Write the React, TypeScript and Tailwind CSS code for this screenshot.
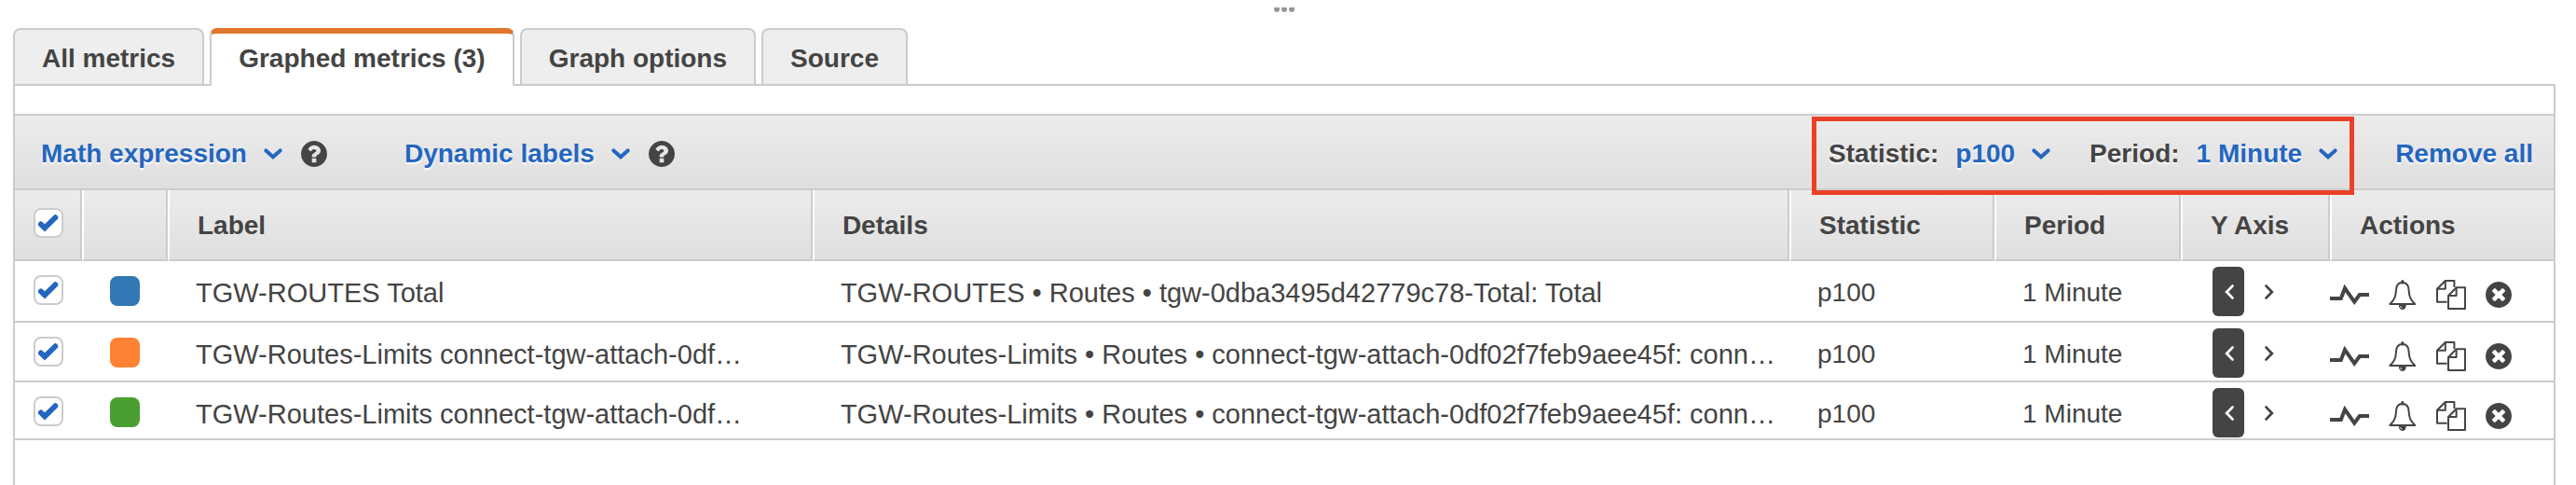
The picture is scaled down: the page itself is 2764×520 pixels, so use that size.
import { useState } from "react";
import type { ReactNode } from "react";

const CIRCLE =
  "M1664 896q0 209-103 385.5t-279.5 279.5-385.5 103-385.5-103-279.5-279.5-103-385.5 103-385.5 279.5-279.5 385.5-103 385.5 103 279.5 279.5 103 385.5z";

function ChevronDown() {
  return (
    <svg width="20" height="12" viewBox="0 0 20 12" fill="none" stroke="#2466bf" strokeWidth="4" strokeLinecap="round" aria-hidden="true">
      <path d="M2.4 2.4 L10 9.2 L17.6 2.4" />
    </svg>
  );
}

function HelpIcon() {
  return (
    <svg width="28" height="28" viewBox="128 128 1536 1536" fill="#444444" fillRule="evenodd" aria-hidden="true">
      <path
        d={
          CIRCLE +
          "M1024 1376v-192q0-14-9-23t-23-9h-192q-14 0-23 9t-9 23v192q0 14 9 23t23 9h192q14 0 23-9t9-23zM1280 704q0-88-55.5-163t-138.5-116-170-41q-243 0-371 213-15 24 8 42l132 100q7 6 19 6 16 0 25-12 53-68 86-92 34-24 86-24 48 0 85.5 26t37.5 59q0 38-20 61t-68 45q-63 28-115.5 86.5t-52.5 125.5v36q0 14 9 23t23 9h192q14 0 23-9t9-23q0-19 21.5-49.5t54.5-49.5q32-18 49-28.5t46-35 44.5-48 28-60.5 12.5-81z"
        }
      />
    </svg>
  );
}

function RemoveIcon() {
  return (
    <svg width="28" height="28" viewBox="128 128 1536 1536" fill="#444444" fillRule="evenodd" aria-hidden="true">
      <path
        d={
          CIRCLE +
          "M1277 1122q0-26-19-45l-181-181 181-181q19-19 19-45 0-27-19-46l-90-90q-19-19-46-19-26 0-45 19l-181 181-181-181q-19-19-45-19-27 0-46 19l-90 90q-19 19-19 46 0 26 19 45l181 181-181 181q-19 19-19 45 0 27 19 46l90 90q19 19 46 19 26 0 45-19l181-181 181 181q19 19 45 19 27 0 46-19l90-90q19-19 19-46z"
        }
      />
    </svg>
  );
}

function WaveIcon() {
  return (
    <svg width="42" height="24" viewBox="0 0 42 24" fill="none" stroke="#444444" strokeWidth="4" aria-hidden="true">
      <path d="M0 16 H11.8 L16 5 L26.2 19.6 L31.8 12 H42" />
    </svg>
  );
}

function BellIcon() {
  return (
    <svg width="30" height="32" viewBox="0 0 30 32" fill="none" stroke="#444444" strokeWidth="2" strokeLinejoin="round" aria-hidden="true">
      <path d="M14.8 3 C10 3 8.2 5.8 8 11 C7.6 18.5 6 21.5 1.4 26 H28.2 C23.6 21.5 22 18.5 21.6 11 C21.4 5.8 19.6 3 14.8 3 Z" />
      <path d="M14.8 1.6 V3" strokeWidth="3" strokeLinecap="round" />
      <path d="M10.8 27 C11 30.6 12.6 32 14.8 32 C17 32 18.6 30.6 18.8 27 Z" fill="#444444" stroke="none" />
      <path d="M12.6 28.2 C12.8 29.4 13.4 30 14.2 30.4" stroke="#ffffff" strokeWidth="1" />
    </svg>
  );
}

function CopyIcon() {
  return (
    <svg width="32" height="32" viewBox="0 0 32 32" fill="none" stroke="#444444" strokeWidth="2" strokeLinejoin="round" aria-hidden="true">
      <path d="M11.6 23.8 H1 V9.8 L9.8 1 H19.4 V8" />
      <path d="M1.4 9.8 H9.8 V1.4" />
      <path d="M13 31 V17 L21.6 8.2 H31 V31 Z" fill="#ffffff" />
      <path d="M13.4 17 H21.6 V8.6" />
    </svg>
  );
}

function Checkbox({ label }: { label: string }) {
  const [checked, setChecked] = useState(true);
  return (
    <label className="relative mx-auto block size-8 cursor-pointer">
      <input
        type="checkbox"
        aria-label={label}
        checked={checked}
        onChange={(e) => setChecked(e.target.checked)}
        className="block size-8 cursor-pointer appearance-none rounded-lg border-2 border-[#cccccc] bg-white"
      />
      {checked && (
        <svg
          className="pointer-events-none absolute inset-0"
          width="32"
          height="32"
          viewBox="0 0 32 32"
          fill="none"
          stroke="#2466bf"
          strokeWidth="5.8"
          strokeLinecap="round"
          aria-hidden="true"
        >
          <path d="M7.8 17.4 L12 21.4 L23.4 10.2" />
        </svg>
      )}
    </label>
  );
}

function Tab({ active, children }: { active?: boolean; children: ReactNode }) {
  return (
    <button
      type="button"
      role="tab"
      aria-selected={!!active}
      className={
        active
          ? "rounded-t-lg border-x-2 border-t-6 border-x-[#cccccc] border-t-[#e1752b] bg-white px-[29px] pt-[9px] pb-[11px] font-bold"
          : "rounded-t-lg border-x-2 border-t-2 border-[#cccccc] bg-[#eeeeee] px-[29px] pt-[13px] pb-[9px] font-bold"
      }
    >
      {children}
    </button>
  );
}

function MenuButton({ label }: { label: string }) {
  return (
    <div className="flex items-center gap-5">
      <button type="button" aria-haspopup="menu" className="flex items-center gap-[18px] font-bold text-[#2466bf] [text-shadow:0_2px_2px_#ffffff]">
        {label}
        <ChevronDown />
      </button>
      <button type="button" aria-label={`${label} help`}>
        <HelpIcon />
      </button>
    </div>
  );
}

function Picker({ id, label, options }: { id: string; label: string; options: string[] }) {
  return (
    <div className="flex items-center gap-[18px]">
      <label htmlFor={id}>{label}</label>
      <div className="flex items-center gap-[18px]">
        <select
          id={id}
          className="cursor-pointer appearance-none bg-transparent p-0 font-bold text-[#2466bf] [field-sizing:content] [text-shadow:0_2px_2px_#ffffff]"
        >
          {options.map((option) => (
            <option key={option}>{option}</option>
          ))}
        </select>
        <ChevronDown />
      </div>
    </div>
  );
}

const rows = [
  {
    label: "TGW-ROUTES Total",
    details: "TGW-ROUTES • Routes • tgw-0dba3495d42779c78-Total: Total",
    swatch: "bg-[#3178b4]",
    height: "h-[66px]",
  },
  {
    label: "TGW-Routes-Limits connect-tgw-attach-0df…",
    details: "TGW-Routes-Limits • Routes • connect-tgw-attach-0df02f7feb9aee45f: conn…",
    swatch: "bg-[#ff8133]",
    height: "h-[64px]",
  },
  {
    label: "TGW-Routes-Limits connect-tgw-attach-0df…",
    details: "TGW-Routes-Limits • Routes • connect-tgw-attach-0df02f7feb9aee45f: conn…",
    swatch: "bg-[#4a9f30]",
    height: "h-[62px]",
  },
];

const th = "border-r-2 border-b-2 border-l-2 border-r-[#cccccc] border-b-[#cccccc] border-l-white bg-linear-to-b from-[#ececec] to-[#dfdfdf] pt-5 pl-[30px] text-left align-top font-bold";
const td = "border-b-2 border-[#cccccc] pt-4 pl-[30px] align-top";

export default function App() {
  return (
    <div className="flex min-h-screen flex-col bg-white pr-[22px] pl-[14px] font-['Liberation_Sans',Arial,sans-serif] text-[28px] leading-9 text-[#444444]">
      <div className="flex h-[30px] justify-center gap-0.5 pt-2">
        <span className="h-[5px] w-1.5 rounded-b-sm bg-[#999999]" />
        <span className="h-[5px] w-1.5 rounded-b-sm bg-[#999999]" />
        <span className="h-[5px] w-1.5 rounded-b-sm bg-[#999999]" />
      </div>

      <div role="tablist" className="relative z-10 -mb-0.5 flex items-start gap-1.5">
        <Tab>All metrics</Tab>
        <Tab active>Graphed metrics (3)</Tab>
        <Tab>Graph options</Tab>
        <Tab>Source</Tab>
      </div>

      <main className="flex-1 border-x-2 border-t-2 border-[#cccccc] pt-[30px]">
        <div className="flex h-[82px] items-stretch justify-between border-y-2 border-[#cccccc] bg-linear-to-b from-[#ececec] to-[#dfdfdf] pr-[22px] pl-7">
          <div className="flex items-center gap-[83px] pt-[3px]">
            <MenuButton label="Math expression" />
            <MenuButton label="Dynamic labels" />
          </div>
          <div className="flex items-stretch gap-[62px]">
            <div className="relative flex items-center gap-[42px] pt-[3px] font-bold [text-shadow:0_2px_2px_#ffffff]">
              <Picker id="statistic" label="Statistic:" options={["p100", "p99", "Average", "Sum"]} />
              <Picker id="period" label="Period:" options={["1 Minute", "5 Minutes", "1 Hour"]} />
              <div className="pointer-events-none absolute -inset-x-[18px] top-px -bottom-[7px] border-5 border-[#ec4026]" />
            </div>
            <button type="button" className="pt-[3px] font-bold text-[#2466bf] [text-shadow:0_2px_2px_#ffffff]">
              Remove all
            </button>
          </div>
        </div>

        <table className="w-full table-fixed border-separate border-spacing-0">
          <colgroup>
            <col className="w-[72px]" />
            <col className="w-[92px]" />
            <col className="w-[25.4%]" />
            <col />
            <col className="w-[220px]" />
            <col className="w-[200px]" />
            <col className="w-[160px]" />
            <col className="w-[240px]" />
          </colgroup>
          <thead>
            <tr className="h-[76px]">
              <th className="border-r-2 border-b-2 border-[#cccccc] bg-linear-to-b from-[#ececec] to-[#dfdfdf] p-0 pt-[19px] pr-4 pl-[18px] align-top">
                <Checkbox label="Select all metrics" />
              </th>
              <th className={th} aria-label="Color" />
              <th className={th}>Label</th>
              <th className={th}>Details</th>
              <th className={th}>Statistic</th>
              <th className={th}>Period</th>
              <th className={th}>Y Axis</th>
              <th className="border-b-2 border-l-2 border-b-[#cccccc] border-l-white bg-linear-to-b from-[#ececec] to-[#dfdfdf] pt-5 pl-[30px] text-left align-top font-bold">
                Actions
              </th>
            </tr>
          </thead>
          <tbody>
            {rows.map((row, i) => (
              <tr key={i} className={row.height}>
                <td className="border-b-2 border-[#cccccc] pt-[15px] align-top">
                  <Checkbox label={`Select ${row.label}`} />
                </td>
                <td className="border-b-2 border-[#cccccc] p-0 pt-4 pl-[30px] align-top">
                  <button type="button" aria-label="Change color" className={`block size-8 rounded-lg ${row.swatch}`} />
                </td>
                <td className={`${td} truncate text-[29px]`}>{row.label}</td>
                <td className={`${td} truncate text-[29px]`}>{row.details}</td>
                <td className={td}>p100</td>
                <td className={td}>1 Minute</td>
                <td className="border-b-2 border-[#cccccc] pt-1.5 pl-[34px] align-top">
                  <div className="flex items-center gap-[10px]">
                    <button type="button" aria-label="Left Y axis" aria-pressed="true" className="flex h-[53px] w-[34px] items-center justify-center rounded-md bg-[#444444]">
                      <svg width="12" height="16" viewBox="-2 0 12 16" fill="none" stroke="#ffffff" strokeWidth="2.8" strokeLinecap="round" aria-hidden="true">
                        <path d="M8.4 1.6 L2.2 8 L8.4 14.4" />
                      </svg>
                    </button>
                    <button type="button" aria-label="Right Y axis" aria-pressed="false" className="flex h-[53px] w-[34px] items-center justify-center rounded-md">
                      <svg width="10" height="16" viewBox="0 0 10 16" fill="none" stroke="#444444" strokeWidth="2.8" strokeLinecap="round" aria-hidden="true">
                        <path d="M1.6 1.6 L7.8 8 L1.6 14.4" />
                      </svg>
                    </button>
                  </div>
                </td>
                <td className="border-b-2 border-[#cccccc] p-0 pt-5 align-top">
                  <div className="flex h-8 items-center gap-[21px]">
                    <button type="button" aria-label="Anomaly detection">
                      <WaveIcon />
                    </button>
                    <button type="button" aria-label="Create alarm">
                      <BellIcon />
                    </button>
                    <button type="button" aria-label="Duplicate">
                      <CopyIcon />
                    </button>
                    <button type="button" aria-label="Remove">
                      <RemoveIcon />
                    </button>
                  </div>
                </td>
              </tr>
            ))}
          </tbody>
        </table>
      </main>
    </div>
  );
}
